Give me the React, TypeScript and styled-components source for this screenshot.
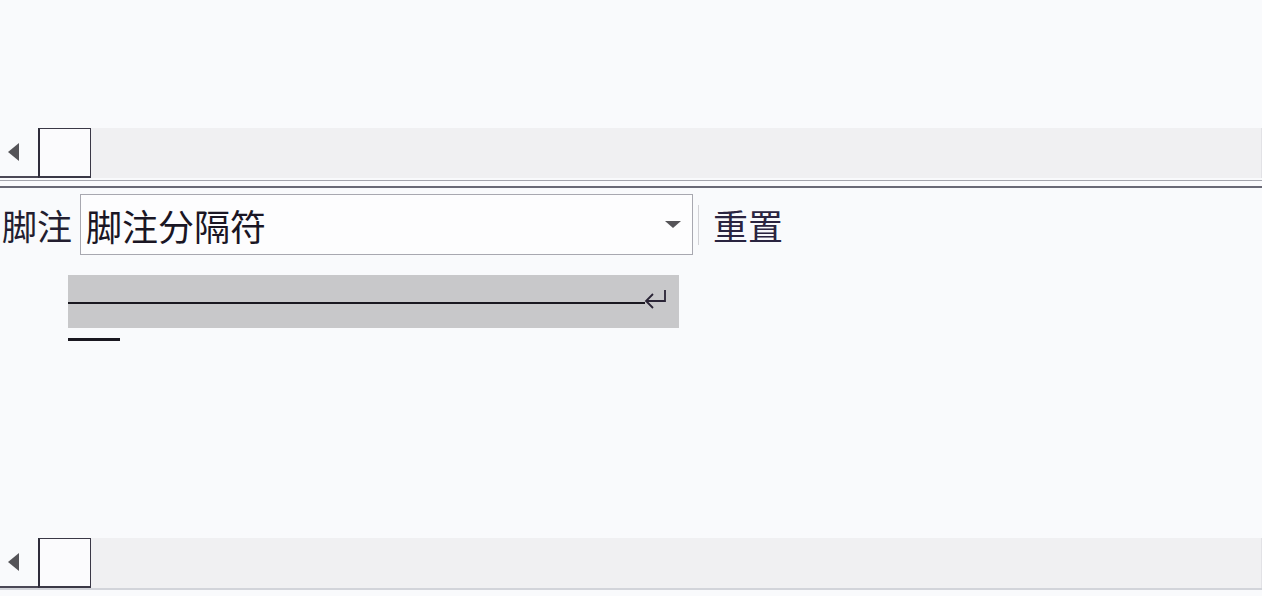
import React from "react";
import styled, { createGlobalStyle } from "styled-components";

const GlobalStyle = createGlobalStyle`
    html, body {
        margin: 0;
        padding: 0;
        background: #f9fafc;
    }
    body {
        font-family: "Noto Sans CJK SC", "Noto Sans", sans-serif;
        color: #1d1a28;
    }
`;

const Page = styled.div`
    width: 1262px;
    height: 596px;
    overflow: hidden;
    background: #f9fafc;
    display: flex;
    flex-direction: column;
`;

const Spacer = styled.div<{ $h: number }>`
    height: ${(p) => p.$h}px;
    flex-shrink: 0;
`;

const ScrollBar = styled.div`
    height: 50px;
    flex-shrink: 0;
    display: flex;
    background: #f0f0f2;
    border-right: 1px solid #e2e2e6;
    box-sizing: border-box;
`;

const ArrowButton = styled.div`
    width: 38px;
    display: flex;
    align-items: center;
    padding-left: 8px;
    box-sizing: border-box;
    background: #f9fafc;
    border-bottom: 2px solid #4a4856;
`;

const LeftTriangle = styled.span`
    width: 0;
    height: 0;
    border-top: 9px solid transparent;
    border-bottom: 9px solid transparent;
    border-right: 11px solid #555458;
`;

const Thumb = styled.div`
    width: 53px;
    background: #fbfbfd;
    border: 1px solid #3a3846;
    border-left: 2px solid #2e2c3a;
    border-bottom-width: 2px;
    box-sizing: border-box;
`;

const Divider = styled.div`
    height: 8px;
    flex-shrink: 0;
    margin-top: 2px;
    border-top: 1px solid #a4a5ad;
    border-bottom: 2px solid #6a6a76;
    background: #fbfbfd;
    box-sizing: border-box;
`;

const BottomLine = styled.div`
    height: 3px;
    flex-shrink: 0;
    border-top: 2px solid #d2d4da;
    box-sizing: border-box;
`;

const Row = styled.div`
    display: flex;
    align-items: center;
    height: 61px;
    flex-shrink: 0;
`;

const Label = styled.span`
    font-size: 35px;
    line-height: 1;
    margin-left: 2px;
    width: 78px;
    white-space: nowrap;
    color: #231e30;
`;

const Select = styled.div`
    width: 613px;
    height: 61px;
    box-sizing: border-box;
    border: 1px solid #a8a8b0;
    background: #fdfdfe;
    display: flex;
    align-items: center;
    padding-left: 5px;
    padding-right: 11px;
`;

const SelectText = styled.span`
    flex: 1;
    font-size: 36px;
    line-height: 1;
    color: #1a1624;
`;

const DownTriangle = styled.span`
    width: 0;
    height: 0;
    border-left: 8px solid transparent;
    border-right: 8px solid transparent;
    border-top: 7px solid #555458;
`;

const Separator = styled.span`
    width: 1px;
    height: 40px;
    background: #d2d2d6;
    margin-left: 5px;
    margin-right: 14px;
`;

const ResetText = styled.span`
    font-size: 35px;
    line-height: 1;
    color: #2a2440;
`;

const Preview = styled.div`
    margin-left: 68px;
    width: 611px;
    height: 53px;
    flex-shrink: 0;
    background: #c8c8ca;
    display: flex;
    align-items: center;
    padding-top: 3px;
    box-sizing: border-box;
`;

const Rule = styled.span<{ $w: number }>`
    width: ${(p) => p.$w}px;
    height: 2px;
    background: #1a1820;
    flex-shrink: 0;
`;

const ReturnMark = styled.svg`
    width: 24px;
    height: 24px;
    margin-left: -1px;
    margin-top: -4px;
    flex-shrink: 0;
`;

const ShortRule = styled.div`
    margin-left: 68px;
    width: 52px;
    height: 3px;
    flex-shrink: 0;
    background: #1a1820;
`;

const HScroll = () => (
    <ScrollBar>
        <ArrowButton>
            <LeftTriangle />
        </ArrowButton>
        <Thumb />
    </ScrollBar>
);

export default function App() {
    return (
        <>
            <GlobalStyle />
            <Page>
                <Spacer $h={128} />
                <HScroll />
                <Divider />
                <Spacer $h={6} />
                <Row>
                    <Label>脚注</Label>
                    <Select>
                        <SelectText>脚注分隔符</SelectText>
                        <DownTriangle />
                    </Select>
                    <Separator />
                    <ResetText>重置</ResetText>
                </Row>
                <Spacer $h={20} />
                <Preview>
                    <Rule $w={577} />
                    <ReturnMark viewBox="0 0 24 24" fill="none" stroke="#2a2436" strokeWidth="1.8">
                        <path d="M21 1 V12 H2" />
                        <path d="M9 5 L2 12 L9 19" />
                    </ReturnMark>
                </Preview>
                <Spacer $h={10} />
                <ShortRule />
                <Spacer $h={197} />
                <HScroll />
                <BottomLine />
            </Page>
        </>
    );
}
